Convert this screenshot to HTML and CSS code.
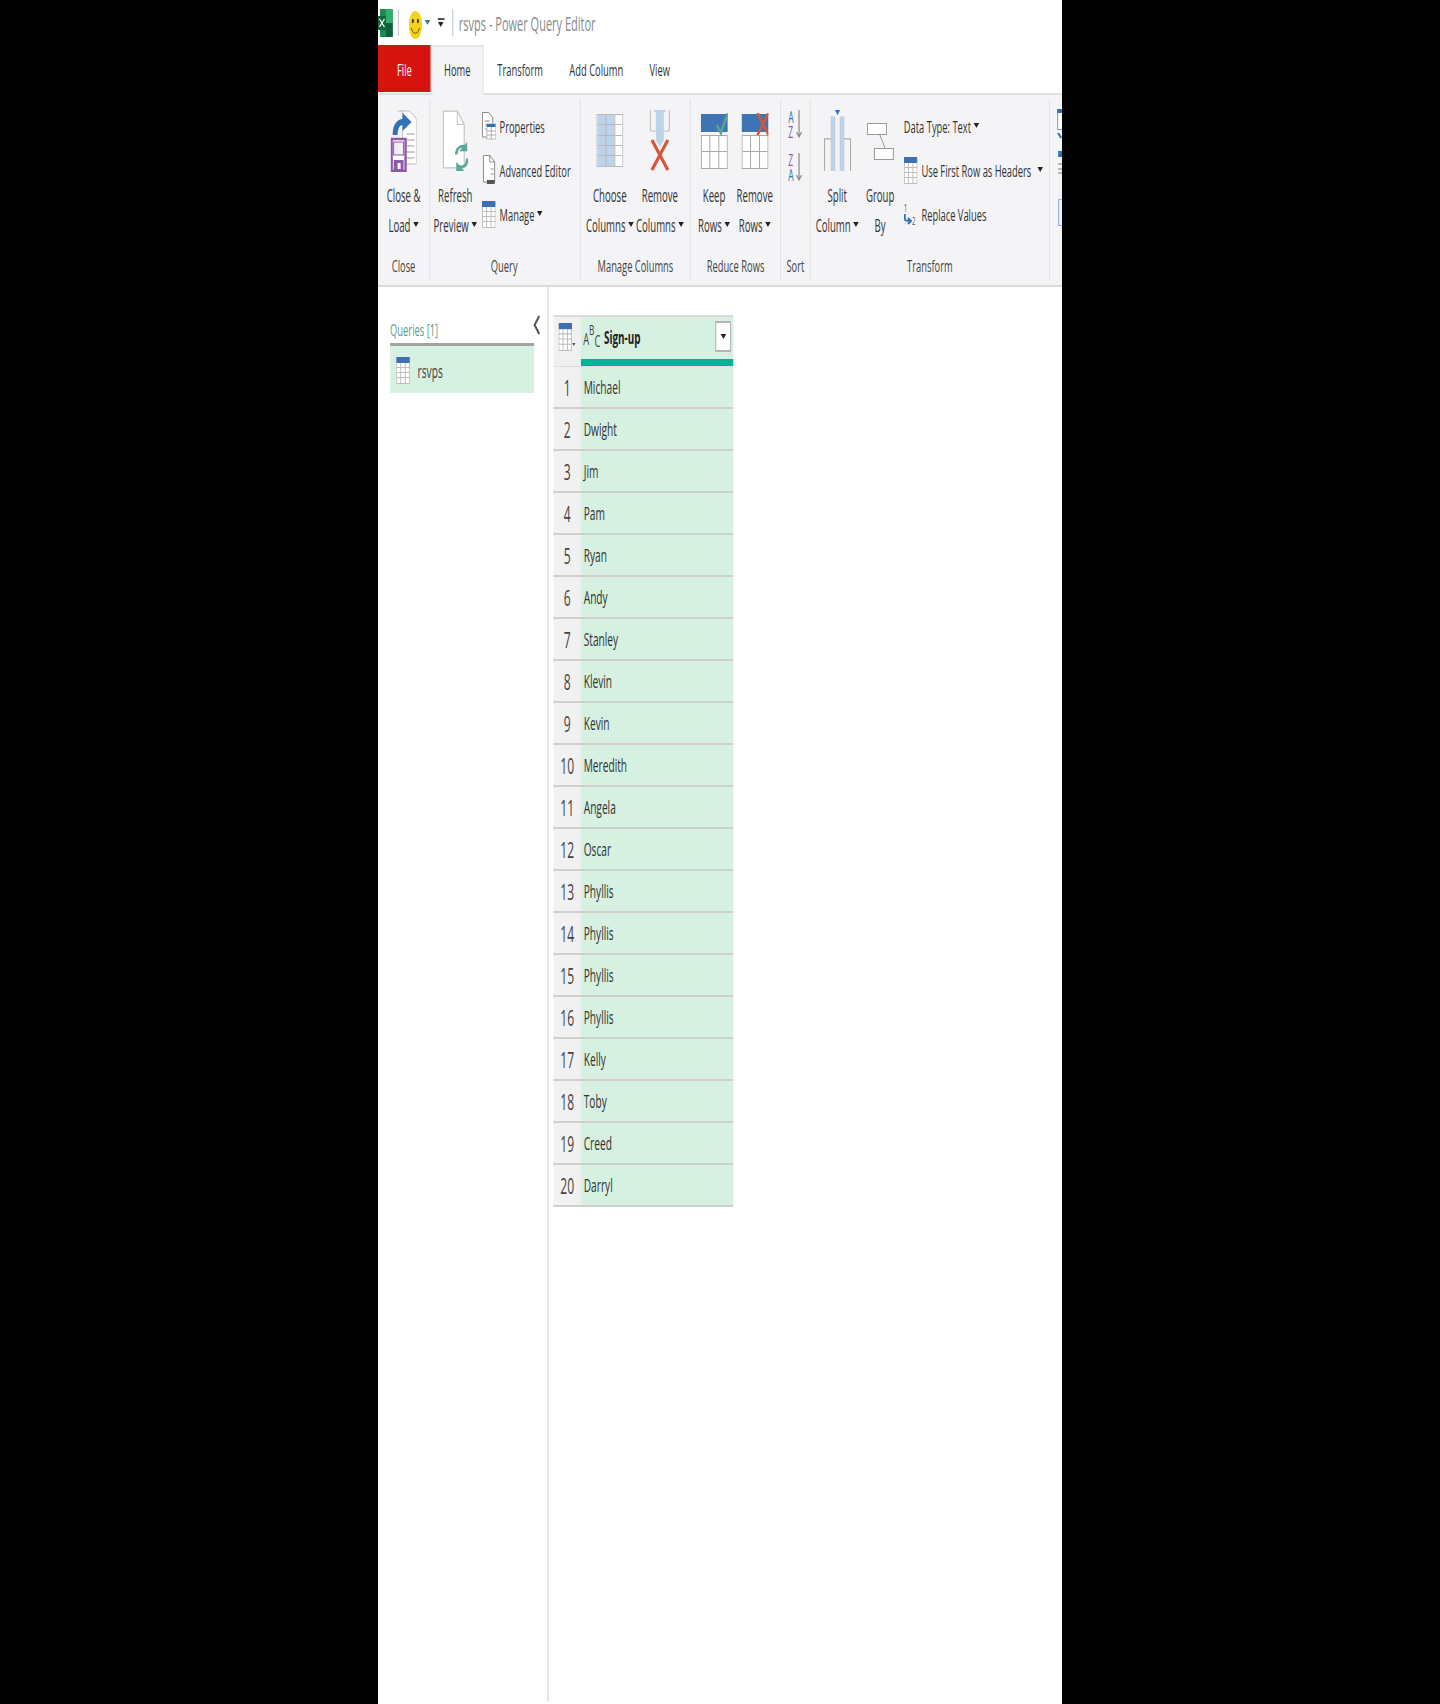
FILE: index.html
```html
<!DOCTYPE html>
<html lang="en">
<head>
<meta charset="utf-8">
<title>rsvps - Power Query Editor</title>
<link rel="stylesheet" href="styles.css">
</head>
<body>
<svg class="defs" width="0" height="0" aria-hidden="true">
  <defs>
    <symbol id="tbl" viewBox="0 0 14 27" preserveAspectRatio="none">
      <rect x="0.5" y="0.5" width="13" height="26" fill="#fff" stroke="#bdbdbd"/>
      <rect x="0" y="0" width="14" height="6" fill="#3f6fb0"/>
      <path d="M0 10.5H14M0 15.5H14M0 20.5H14M4.7 6V27M9.3 6V27" stroke="#bdbdbd" fill="none"/>
    </symbol>
  </defs>
</svg>
<div class="stage">
<div class="app">
  <header class="titlebar">
    <svg class="i-excel" width="27" height="28" viewBox="0 0 15 28" preserveAspectRatio="none"><rect x="2" y="0" width="13" height="28" fill="#1f8a55"/><path d="M8 0H15V14H8Z" fill="#33b06f"/><path d="M8 14H15V28H8Z" fill="#11603a"/><rect x="0" y="7" width="8" height="14" fill="#0f6b3f"/><path d="M1.5 10L6.5 18M6.5 10L1.5 18" stroke="#fff" stroke-width="1.3"/></svg>
    <span class="qsep qsep-a"></span>
    <svg class="i-smile" width="24" height="28" viewBox="0 0 13 28" preserveAspectRatio="none"><ellipse cx="6.5" cy="14" rx="6.5" ry="14" fill="#f6d21c"/><ellipse cx="4" cy="10" rx="1" ry="2.2" fill="#333"/><ellipse cx="9" cy="10" rx="1" ry="2.2" fill="#333"/><path d="M2.5 17C4 24 9 24 10.500 17" stroke="#7a6200" stroke-width="1" fill="none"/></svg>
    <span class="caret caret-teal qcaret"></span>
    <span class="qcustom"><span class="caret"></span></span>
    <span class="qsep qsep-b"></span>
    <span class="doc-title">rsvps - Power Query Editor</span>
  </header>

  <nav class="tabs">
    <span class="tab tab-file">File</span>
    <span class="tab tab-active">Home</span>
    <span class="tab">Transform</span>
    <span class="tab">Add Column</span>
    <span class="tab">View</span>
  </nav>

  <section class="ribbon">
    <div class="group g-close">
      <div class="group-body">
        <div class="big big-close">
          <svg class="big-icon" width="47" height="62" viewBox="0 0 26 62" preserveAspectRatio="none"><path d="M7 1H19L26 9V54H12V1" fill="#fff" stroke="#bcbcbc"/><path d="M16 24H24M16 30H24M16 36H24M16 42H24M16 48H24" stroke="#9a9a9a"/><path d="M2 25C2 14 7 9 12 9V3L21 12L12 21V15C9 15 7 19 7 25Z" fill="#2f72b5"/><rect x="1" y="29" width="14" height="32" fill="#fff" stroke="#8e5aa8" stroke-width="2.400"/><rect x="3" y="32" width="10" height="13" fill="#f3edf7" stroke="#8e5aa8"/><rect x="3" y="50" width="10" height="11" fill="#8e5aa8"/><rect x="7" y="53" width="3" height="6" fill="#fff"/></svg>
          <div class="big-label">Close &amp;<br>Load<span class="caret"></span></div>
        </div>
      </div>
      <div class="group-label">Close</div>
    </div>

    <div class="group g-query">
      <div class="group-body">
        <div class="big big-refresh">
          <svg class="big-icon" width="47" height="62" viewBox="0 0 26 60" preserveAspectRatio="none"><path d="M1 1H15L22 14V56H1Z" fill="#fff" stroke="#c4c4c4" stroke-width="1.200"/><path d="M15 1V14H22" fill="none" stroke="#c4c4c4"/><path d="M14 43C14 37 18 35 21 35C22 35 23 35 24 36" fill="none" stroke="#5ba799" stroke-width="2.600"/><path d="M25 31V40H17Z" fill="#5ba799"/><path d="M25 47C25 53 22 55 19 55C18 55 17 55 16 54" fill="none" stroke="#5ba799" stroke-width="2.600"/><path d="M14 50V59H22Z" fill="#5ba799"/></svg>
          <div class="big-label">Refresh<br>Preview<span class="caret"></span></div>
        </div>
        <div class="smalls">
          <div class="small">
            <svg class="small-icon" width="25" height="28" viewBox="0 0 14 28" preserveAspectRatio="none"><path d="M0.500 0.500H7L11 6V25H0.500Z" fill="#fff" stroke="#8a8a8a"/><path d="M3 9H8M3 13H5M3 17H5" stroke="#8a8a8a"/><rect x="5" y="12" width="9" height="15" fill="#fff" stroke="#bbb"/><rect x="5" y="12" width="9" height="3" fill="#2f72b5"/><path d="M5 19H14M5 23H14M9.500 15V27" stroke="#aaa"/></svg>
            <span>Properties</span>
          </div>
          <div class="small">
            <svg class="small-icon" width="25" height="30" viewBox="0 0 14 30" preserveAspectRatio="none"><path d="M1.500 0.500H8L13 7V27H1.500Z" fill="#fff" stroke="#8a8a8a"/><path d="M8 0.500V7H13" fill="none" stroke="#8a8a8a"/><path d="M9 14H12M9 19H12" stroke="#8a8a8a"/><path d="M5 25L13 25V29H5Z" fill="#555"/></svg>
            <span>Advanced Editor</span>
          </div>
          <div class="small">
            <svg class="small-icon" width="25" height="27" viewBox="0 0 14 27" preserveAspectRatio="none"><use href="#tbl" width="14" height="27"/></svg>
            <span>Manage<span class="caret"></span></span>
          </div>
        </div>
      </div>
      <div class="group-label">Query</div>
    </div>

    <div class="group g-manage">
      <div class="group-body">
        <div class="big big-wide">
          <svg class="big-icon i-choose" width="49" height="53" viewBox="0 0 27 53" preserveAspectRatio="none"><rect x="0.500" y="0.500" width="26" height="52" fill="#fff" stroke="#bbb"/><rect x="1" y="1" width="17" height="51" fill="#bcd3ea"/><path d="M9.500 1V52M18.500 1V52M1 10.500H26M1 21.500H26M1 31.500H26M1 41.500H26" stroke="#b8b8b8" fill="none"/></svg>
          <div class="big-label">Choose<br>Columns<span class="caret"></span></div>
        </div>
        <div class="big big-wide">
          <svg class="big-icon" width="47" height="62" viewBox="0 0 26 62" preserveAspectRatio="none"><path d="M3.500 0V21H22.500V0" fill="none" stroke="#bdbdbd"/><rect x="7" y="0" width="12" height="2" fill="#bcd3ea"/><path d="M9 0H17V30L13 37L9 30Z" fill="#bcd3ea"/><path d="M5 30L21 60M21 30L5 60" stroke="#d9553a" stroke-width="3.200"/></svg>
          <div class="big-label">Remove<br>Columns<span class="caret"></span></div>
        </div>
      </div>
      <div class="group-label">Manage Columns</div>
    </div>

    <div class="group g-reduce">
      <div class="group-body">
        <div class="big big-mid">
          <svg class="big-icon i-rows" width="49" height="56" viewBox="0 0 27 56" preserveAspectRatio="none"><rect x="0" y="1" width="27" height="18" fill="#3f74b5"/><rect x="0.500" y="22.500" width="26" height="33" fill="#fff" stroke="#a9a9a9"/><path d="M9 23V55M18 23V55M1 38.500H26" stroke="#a9a9a9"/><path d="M16 12L20 20L27 0" fill="none" stroke="#5aa58a" stroke-width="2.500"/></svg>
          <div class="big-label">Keep<br>Rows<span class="caret"></span></div>
        </div>
        <div class="big big-mid">
          <svg class="big-icon i-rows" width="49" height="56" viewBox="0 0 27 56" preserveAspectRatio="none"><rect x="0" y="1" width="27" height="18" fill="#3f74b5"/><rect x="0.500" y="22.500" width="26" height="33" fill="#fff" stroke="#a9a9a9"/><path d="M9 23V55M18 23V55M1 38.500H26" stroke="#a9a9a9"/><path d="M16 0L27 22M27 0L16 22" stroke="#d9553a" stroke-width="2.500"/></svg>
          <div class="big-label">Remove<br>Rows<span class="caret"></span></div>
        </div>
      </div>
      <div class="group-label">Reduce Rows</div>
    </div>

    <div class="group g-sort">
      <div class="group-body">
        <div class="sorts">
          <div class="sort">
            <span class="sort-letters"><span class="sort-a">A</span><span class="sort-z">Z</span></span>
            <svg class="sort-arrow" width="11" height="30" viewBox="0 0 6 30" preserveAspectRatio="none"><path d="M3 0V26M0.500 22L3 27L5.500 22" fill="none" stroke="#8a8a8a" stroke-width="1.200"/></svg>
          </div>
          <div class="sort">
            <span class="sort-letters"><span class="sort-z">Z</span><span class="sort-a">A</span></span>
            <svg class="sort-arrow" width="11" height="30" viewBox="0 0 6 30" preserveAspectRatio="none"><path d="M3 0V26M0.500 22L3 27L5.500 22" fill="none" stroke="#8a8a8a" stroke-width="1.200"/></svg>
          </div>
        </div>
      </div>
      <div class="group-label">Sort</div>
    </div>

    <div class="group g-transform">
      <div class="group-body">
        <div class="big big-split">
          <svg class="big-icon" width="49" height="58" viewBox="0 0 27 58" preserveAspectRatio="none"><path d="M0.500 57V27H7M26.500 57V27H20" fill="none" stroke="#a9a9a9"/><rect x="7" y="6" width="4" height="51" fill="#bcd3ea"/><rect x="16" y="6" width="4" height="51" fill="#bcd3ea"/><path d="M7 6V57M11 6V57M16 6V57M20 6V57" stroke="#c4c4c4" stroke-width="0.500"/><path d="M11 0H16L13.500 5Z" fill="#2f72b5"/></svg>
          <div class="big-label">Split<br>Column<span class="caret"></span></div>
        </div>
        <div class="big big-split">
          <svg class="big-icon i-group" width="49" height="38" viewBox="0 0 27 38" preserveAspectRatio="none"><rect x="0.500" y="0.500" width="19" height="11" fill="#fff" stroke="#999"/><rect x="7.500" y="25.500" width="19" height="11" fill="#fff" stroke="#999"/><path d="M13 12L18 25" stroke="#999"/></svg>
          <div class="big-label">Group<br>By</div>
        </div>
        <div class="smalls smalls-t">
          <div class="small small-text"><span>Data Type: Text<span class="caret"></span></span></div>
          <div class="small">
            <svg class="small-icon" width="25" height="27" viewBox="0 0 14 27" preserveAspectRatio="none"><use href="#tbl" width="14" height="27"/></svg>
            <span>Use First Row as Headers<span class="caret caret-far"></span></span>
          </div>
          <div class="small">
            <span class="rep-icon">
              <span class="rep-one">1</span>
              <span class="rep-bottom">
                <svg class="rep-arrow" width="15" height="13" viewBox="0 0 8 13" preserveAspectRatio="none"><path d="M1 0V5C1 7 3 7 7 7M4 4L7 7L4 10" fill="none" stroke="#2f72b5" stroke-width="1.800"/></svg>
                <span class="rep-two">2</span>
              </span>
            </span>
            <span>Replace Values</span>
          </div>
        </div>
      </div>
      <div class="group-label">Transform</div>
    </div>

    <div class="group g-next">
      <div class="group-body">
        <svg class="i-next" width="22" height="118" viewBox="0 0 12 118" preserveAspectRatio="none"><rect x="7.500" y="0.500" width="6" height="20" fill="#fff" stroke="#7a9cc4"/><rect x="7" y="0" width="6" height="4" fill="#2f72b5"/><path d="M8 24L11 29" stroke="#2f72b5" stroke-width="2"/><rect x="8" y="42" width="4" height="6" fill="#2f72b5"/><path d="M8 55H12M8 60H12M8 64H12" stroke="#777"/><rect x="8.500" y="90.500" width="6" height="26" fill="#eaf1f8" stroke="#8fb2d6"/></svg>
      </div>
    </div>
  </section>

  <main class="main">
    <aside class="pane">
      <div class="pane-top">
        <div class="pane-head">Queries [1]</div>
        <svg class="chevron" width="13" height="20" viewBox="0 0 7 20" preserveAspectRatio="none"><path d="M6 1L1.500 10L6 19" fill="none" stroke="#555" stroke-width="2"/></svg>
      </div>
      <div class="query-item">
        <svg class="query-icon" width="25" height="27" viewBox="0 0 14 27" preserveAspectRatio="none"><use href="#tbl" width="14" height="27"/></svg>
        <span>rsvps</span>
      </div>
    </aside>

    <div class="grid">
      <div class="grid-head">
        <div class="corner">
          <svg class="corner-icon" width="25" height="28" viewBox="0 0 14 27" preserveAspectRatio="none"><use href="#tbl" width="14" height="27"/></svg>
          <span class="caret caret-mini"></span>
        </div>
        <div class="col-head">
          <span class="abc"><span class="abc-a">A</span><span class="abc-b">B</span><span class="abc-c">C</span></span>
          <span class="col-name">Sign-up</span>
          <span class="col-btn"><span class="caret"></span></span>
        </div>
      </div>
      <div class="quality"><span class="quality-idx"></span><span class="quality-bar"></span></div>
      <div class="row"><span class="idx">1</span><span class="cell">Michael</span></div>
      <div class="row"><span class="idx">2</span><span class="cell">Dwight</span></div>
      <div class="row"><span class="idx">3</span><span class="cell">Jim</span></div>
      <div class="row"><span class="idx">4</span><span class="cell">Pam</span></div>
      <div class="row"><span class="idx">5</span><span class="cell">Ryan</span></div>
      <div class="row"><span class="idx">6</span><span class="cell">Andy</span></div>
      <div class="row"><span class="idx">7</span><span class="cell">Stanley</span></div>
      <div class="row"><span class="idx">8</span><span class="cell">Klevin</span></div>
      <div class="row"><span class="idx">9</span><span class="cell">Kevin</span></div>
      <div class="row"><span class="idx">10</span><span class="cell">Meredith</span></div>
      <div class="row"><span class="idx">11</span><span class="cell">Angela</span></div>
      <div class="row"><span class="idx">12</span><span class="cell">Oscar</span></div>
      <div class="row"><span class="idx">13</span><span class="cell">Phyllis</span></div>
      <div class="row"><span class="idx">14</span><span class="cell">Phyllis</span></div>
      <div class="row"><span class="idx">15</span><span class="cell">Phyllis</span></div>
      <div class="row"><span class="idx">16</span><span class="cell">Phyllis</span></div>
      <div class="row"><span class="idx">17</span><span class="cell">Kelly</span></div>
      <div class="row"><span class="idx">18</span><span class="cell">Toby</span></div>
      <div class="row"><span class="idx">19</span><span class="cell">Creed</span></div>
      <div class="row"><span class="idx">20</span><span class="cell">Darryl</span></div>
    </div>
  </main>
</div>
</div>
</body>
</html>
```

FILE: styles.css
```css
* { box-sizing: border-box; }

html, body {
  margin: 0;
  height: 1704px;
  background: #000;
  overflow: hidden;
}

.defs { display: block; height: 0; }

/* The reference is a tall capture squeezed sideways: lay out at full width, then squeeze. */
.stage {
  width: 684px;
  height: 1704px;
  margin-left: 378px;
  background: #fff;
  overflow: hidden;
}

.app {
  width: 1244px;
  height: 1704px;
  display: flex;
  flex-direction: column;
  transform: scaleX(0.55);
  transform-origin: 0 0;
  font-family: "Open Sans", "Liberation Sans", sans-serif;
  font-size: 17px;
  color: #333;
}

svg { display: block; flex: none; }

/* Title bar */
.titlebar {
  height: 45px;
  display: flex;
  align-items: center;
  flex: none;
}
.qsep { width: 2px; height: 27px; background: #bfcbc8; }
.qsep-a { margin-left: 9px; }
.i-smile { margin-left: 18px; margin-top: 4px; }
.qcaret { margin-left: 9px; vertical-align: 0; }
.qcustom {
  margin-left: 14px;
  width: 12px;
  border-top: 2px solid #555;
  padding-top: 2px;
  height: 9px;
  display: flex;
}
.qcustom .caret { margin: 0; }
.qsep-b { margin-left: 14px; }
.doc-title {
  margin-left: 10px;
  padding-top: 2px;
  font-size: 20px;
  color: #8a8a8a;
  white-space: nowrap;
}

/* Tabs */
.tabs {
  height: 50px;
  flex: none;
  display: flex;
  border-bottom: 2px solid #e0e0e0;
}
.tab {
  padding: 0 24px;
  line-height: 50px;
  font-size: 17px;
  color: #333;
  white-space: nowrap;
}
.tab-file {
  width: 96px;
  height: 47px;
  padding: 0;
  line-height: 49px;
  text-align: center;
  background: #d5140f;
  color: #fff;
}
.tab-active {
  width: 96px;
  height: 50px;
  padding: 0;
  line-height: 46px;
  text-align: center;
  background: #f4f4f6;
  border: 2px solid #e6e6e6;
  border-bottom: 0;
}
.tab-active + .tab { padding-left: 25px; }

/* Ribbon */
.ribbon {
  height: 192px;
  flex: none;
  display: flex;
  background: #f4f4f6;
  border-bottom: 2px solid #dcdcdc;
  padding: 4px 0;
}
.group {
  flex: none;
  display: flex;
  flex-direction: column;
  border-right: 2px solid #e4e4e6;
}
.group-body { flex: 1; display: flex; min-height: 0; }
.group-label {
  height: 30px;
  line-height: 29px;
  text-align: center;
  font-size: 17px;
  color: #444;
  white-space: nowrap;
}
.g-close { width: 95px; }
.g-query { width: 274px; }
.g-query .group-label { padding-right: 3px; }
.g-manage { width: 200px; }
.g-manage .group-body { padding-left: 7px; }
.g-reduce { width: 164px; }
.g-reduce .group-body { padding-left: 5px; }
.g-sort { width: 54px; }
.g-transform { width: 435px; }
.g-transform .group-body { padding-left: 9px; }
.g-next { width: 22px; border-right: 0; }

.big {
  display: flex;
  flex-direction: column;
  align-items: center;
  padding-top: 11px;
}
.big-close { width: 93px; }
.big-refresh { width: 91px; }
.big-wide { width: 91px; }
.big-mid { width: 74px; }
.big-split { width: 78px; }
.big-icon { height: 62px; }
.i-choose { margin: 4px 0 5px; height: 53px; }
.i-rows { margin: 3px 0 3px; height: 56px; }
.i-group { margin: 13px 0 11px; height: 38px; }
.big-label {
  margin-top: 8px;
  line-height: 30px;
  text-align: center;
  white-space: nowrap;
  font-size: 17.5px;
  color: #333;
}

.smalls {
  display: flex;
  flex-direction: column;
  padding-top: 5px;
  margin-left: 3px;
}
.smalls-t { margin-left: 4px; }
.small {
  height: 44px;
  display: flex;
  align-items: center;
  gap: 7px;
  white-space: nowrap;
  font-size: 17px;
  color: #333;
}

.sorts {
  display: flex;
  flex-direction: column;
  gap: 13px;
  padding: 11px 0 0 13px;
}
.sort { display: flex; gap: 1px; height: 30px; }
.sort-letters {
  display: flex;
  flex-direction: column;
  width: 13px;
  font-size: 15.5px;
  line-height: 15px;
}
.sort-a { color: #2f72b5; }
.sort-z { color: #8e5aa8; }

.rep-icon {
  width: 25px;
  height: 27px;
  display: flex;
  flex-direction: column;
  font-size: 11px;
  line-height: 13px;
  color: #555;
}
.rep-bottom { display: flex; align-items: flex-end; }

.i-next { margin-top: 10px; }

.caret {
  display: inline-block;
  width: 0;
  height: 0;
  margin-left: 5px;
  vertical-align: 5px;
  border-left: 5px solid transparent;
  border-right: 5px solid transparent;
  border-top: 5px solid #222;
}
.caret-teal { border-top-color: #3f7f78; }
.caret-far { margin-left: 11px; }
.caret-mini {
  margin: 20px 0 0 0;
  border-left-width: 3px;
  border-right-width: 3px;
  border-top-width: 3px;
  border-top-color: #555;
}

/* Main */
.main { flex: 1; display: flex; min-height: 0; }

.pane {
  width: 310px;
  height: 1415px;
  flex: none;
  padding-left: 22px;
  border-right: 2px solid #d2d2d2;
}
.pane-top { display: flex; padding-top: 28px; }
.pane-head {
  width: 262px;
  height: 31px;
  line-height: 29px;
  border-bottom: 3px solid #a3a3a3;
  font-size: 17px;
  color: #5c9c90;
  white-space: nowrap;
}
.chevron { margin-left: -2px; }
.query-item {
  width: 262px;
  height: 47px;
  display: flex;
  align-items: center;
  gap: 14px;
  padding: 1px 0 0 11px;
  background: #d6f1e2;
  font-size: 18.5px;
  color: #444;
}

.grid {
  width: 327px;
  flex: none;
  margin: 28px 0 0 9px;
}
.grid-head {
  height: 44px;
  display: grid;
  grid-template-columns: 50px 277px;
  border-top: 2px solid #dcdcdc;
}
.corner {
  display: flex;
  align-items: flex-start;
  padding: 6px 0 0 9px;
  background: #f1f1f1;
}
.col-head {
  display: flex;
  align-items: center;
  background: #d6f1e2;
  padding: 0 0 3px 4px;
}
.abc {
  display: flex;
  width: 36px;
  height: 30px;
  font-size: 17px;
  color: #444;
}
.abc-a { margin-top: 5px; }
.abc-b { margin-top: -3px; font-size: 15px; }
.abc-c { margin-top: 7px; }
.col-name {
  margin-left: 2px;
  font-weight: 700;
  font-size: 18px;
  color: #222;
  flex: 1;
}
.col-btn {
  width: 29px;
  height: 31px;
  margin-right: 4px;
  display: flex;
  align-items: center;
  justify-content: center;
  background: #fff;
  border: 2px solid #b5b5b5;
}
.col-btn .caret { margin: 0; vertical-align: 0; }

.quality {
  height: 8px;
  display: grid;
  grid-template-columns: 50px 277px;
  border-bottom: 1px solid #dedede;
}
.quality-idx { background: #efefef; }
.quality-bar { background: #00b398; }

.row {
  height: 42px;
  display: grid;
  grid-template-columns: 50px 277px;
  border-bottom: 2px solid #cfcfcf;
}
.idx {
  background: #f1f1f1;
  text-align: center;
  line-height: 40px;
  font-size: 22px;
  color: #444;
}
.cell {
  background: #d6f1e2;
  line-height: 39px;
  padding-left: 5px;
  font-size: 18.5px;
  color: #333;
}
```
